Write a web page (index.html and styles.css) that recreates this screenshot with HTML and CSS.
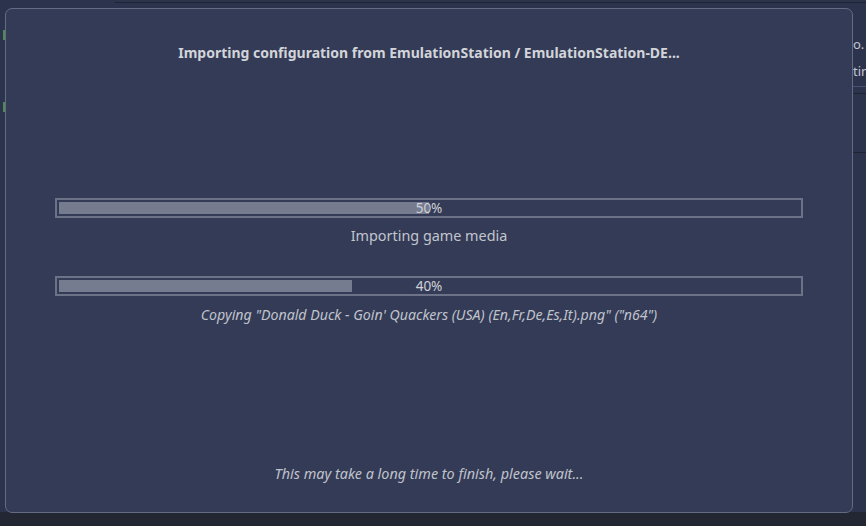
FILE: index.html
```html
<!DOCTYPE html>
<html>
<head>
<meta charset="utf-8">
<link rel="stylesheet" href="styles.css">
</head>
<body>
<div class="app">
  <div class="bg-top"></div>
  <div class="bg-side">
    <div class="bg-text t1">o.</div>
    <div class="bg-text t2">tin</div>
    <div class="bg-line l1"></div>
    <div class="bg-line l2"></div>
    <div class="bg-line l3"></div>
  </div>
  <div class="bg-left">
    <span class="mark m1"></span>
    <span class="mark m2"></span>
  </div>
  <div class="footer"></div>
</div>
<div class="dialog">
  <div class="title">Importing configuration from EmulationStation / EmulationStation-DE...</div>
  <div class="progress p1">
    <div class="fill" style="width:50%"></div>
    <span class="pct">50%</span>
  </div>
  <div class="label">Importing game media</div>
  <div class="progress p2">
    <div class="fill" style="width:39.6%"></div>
    <span class="pct">40%</span>
  </div>
  <div class="detail">Copying "Donald Duck - Goin' Quackers (USA) (En,Fr,De,Es,It).png" ("n64")</div>
  <div class="spacer"></div>
  <div class="wait">This may take a long time to finish, please wait...</div>
</div>
</body>
</html>
```
FILE: styles.css
```css
html, body {
  margin: 0;
  padding: 0;
  width: 866px;
  height: 526px;
  overflow: hidden;
  background: #2c334d;
  font-family: "Noto Sans", "Open Sans", sans-serif;
}
.app {
  position: relative;
  width: 866px;
  height: 526px;
}
.bg-top {
  position: absolute;
  left: 115px;
  top: 2px;
  right: 0;
  height: 1px;
  background: #1e2232;
}
.bg-side {
  position: absolute;
  left: 852px;
  top: 0;
  width: 14px;
  height: 512px;
  overflow: hidden;
}
.bg-text {
  position: absolute;
  left: 1px;
  color: #c4c7d0;
  font-size: 13px;
  white-space: nowrap;
}
.t1 { top: 35px; }
.t2 { top: 62px; }
.bg-line {
  position: absolute;
  left: 0;
  right: 0;
  height: 1px;
}
.l1 { top: 86px; background: #4a5170; }
.l2 { top: 93px; background: #1f2334; }
.l3 { top: 152px; background: #1f2334; }
.bg-left {
  position: absolute;
  left: 0;
  top: 0;
  width: 5px;
  height: 512px;
}
.mark {
  position: absolute;
  left: 3px;
  width: 2px;
  height: 10px;
  background: #4f8a55;
}
.m1 { top: 30px; }
.m2 { top: 102px; }
.footer {
  position: absolute;
  left: 0;
  right: 0;
  bottom: 0;
  height: 14px;
  background: #232733;
}
.dialog {
  position: absolute;
  left: 5px;
  top: 8px;
  width: 748px;
  height: 503px;
  border: 1px solid #656b82;
  border-radius: 7px;
  background: #333b56;
  display: flex;
  flex-direction: column;
  align-items: stretch;
  padding: 0 49px;
  box-sizing: content-box;
}
.title {
  margin-top: 35px;
  text-align: center;
  font-weight: bold;
  font-size: 14px;
  color: #d2d4da;
  line-height: 18px;
  white-space: nowrap;
}
.progress {
  position: relative;
  height: 12px;
  border: 2px solid #6c7287;
  display: flex;
  padding: 2px;
}
.p1 { margin-top: 136px; }
.p2 { margin-top: 30px; }
.fill {
  background: #767c8f;
  height: 12px;
}
.pct {
  position: absolute;
  left: 0;
  right: 0;
  top: 0;
  text-align: center;
  font-size: 13.5px;
  line-height: 16px;
  color: #d0d2d8;
}
.label {
  margin-top: 8px;
  text-align: center;
  font-size: 14.4px;
  line-height: 20px;
  color: #c2c5ce;
}
.detail {
  margin-top: 10px;
  text-align: center;
  font-style: italic;
  font-size: 14.2px;
  line-height: 18px;
  color: #c0c3cc;
  white-space: nowrap;
}
.spacer { flex: 1; }
.wait {
  margin-bottom: 28px;
  text-align: center;
  font-style: italic;
  font-size: 14.4px;
  line-height: 20px;
  color: #c0c3cc;
}
```
